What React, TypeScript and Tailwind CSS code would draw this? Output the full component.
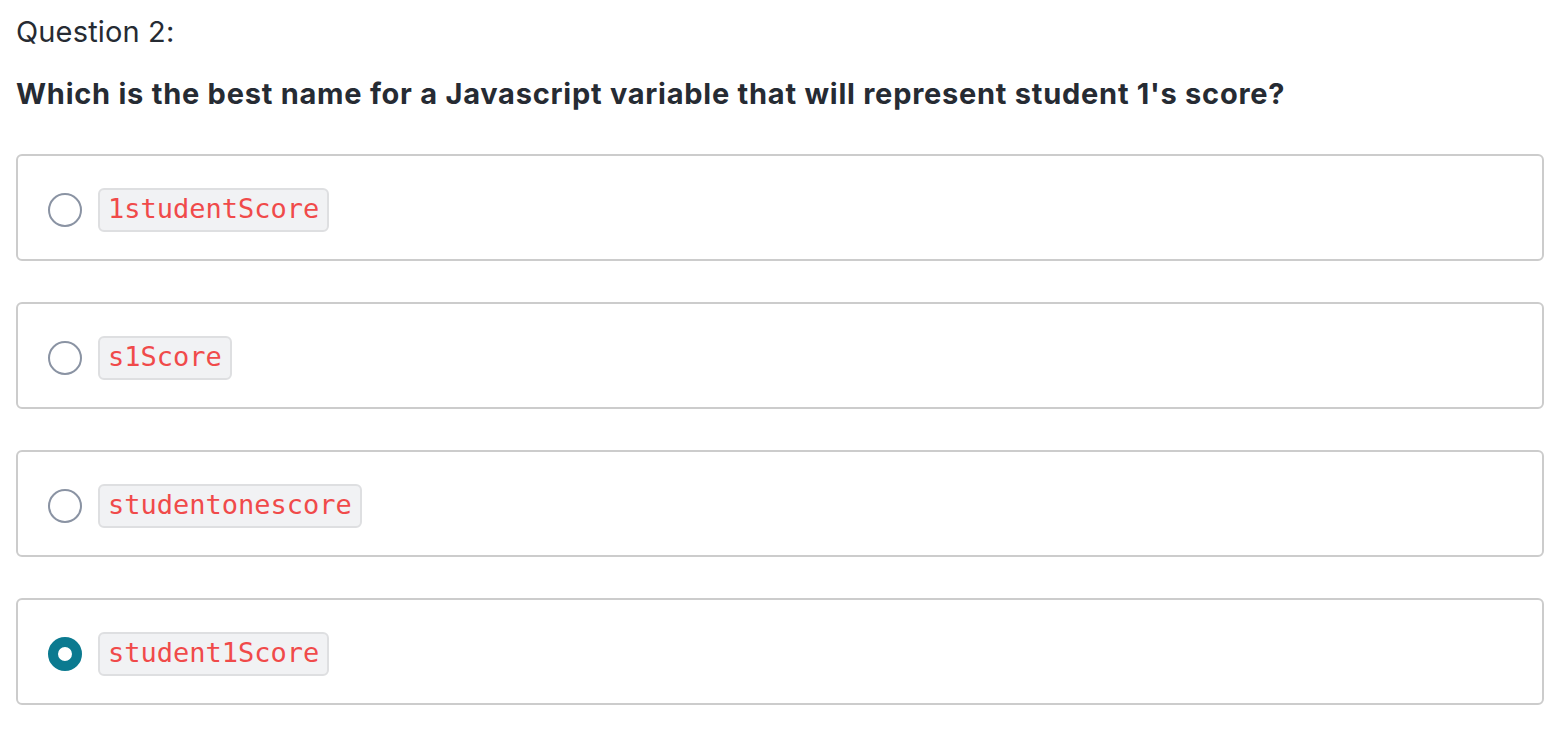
import React from "react";

const options = [
  { label: "1studentScore", selected: false },
  { label: "s1Score", selected: false },
  { label: "studentonescore", selected: false },
  { label: "student1Score", selected: true },
];

export default function App() {
  return (
    <div className="w-[1568px] h-[736px] bg-white text-[#262b33] px-[16px] pt-[12px]" style={{ fontFamily: "Inter, 'Noto Sans', sans-serif" }}>
      <div className="text-[29px] leading-[40px] tracking-[0.15px]">Question 2:</div>
      <div className="mt-[22px] text-[29px] leading-[40px] font-bold tracking-[0.75px] whitespace-nowrap">
        Which is the best name for a Javascript variable that will represent student 1's score?
      </div>
      <div className="mt-[40px] flex flex-col gap-[41px] w-[1528px]">
        {options.map((o) => (
          <div key={o.label} className="h-[107px] border-2 border-[#cccccc] rounded-[6px] flex items-center pl-[30px] pt-[4px]">
            {o.selected ? (
              <div className="w-[34px] h-[34px] rounded-full border-[10px] border-[#0b7a90] bg-white" />
            ) : (
              <div className="w-[34px] h-[34px] rounded-full border-2 border-[#8a93a3] bg-white" />
            )}
            <div
              className="ml-[16px] h-[44px] px-[8px] flex items-center bg-[#f1f2f4] border-2 border-[#dedfe1] rounded-[6px] text-[#f04a4a] text-[27px]"
              style={{ fontFamily: "'DejaVu Sans Mono', monospace" }}
            >
              {o.label}
            </div>
          </div>
        ))}
      </div>
    </div>
  );
}
